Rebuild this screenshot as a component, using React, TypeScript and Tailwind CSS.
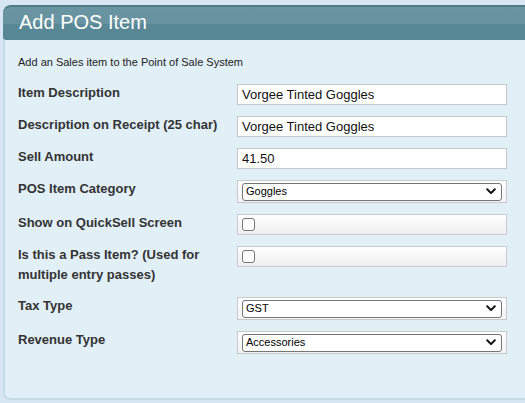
import React from "react";

const font = { fontFamily: '"Liberation Sans", Arial, Helvetica, sans-serif' };

function Chevron() {
  return (
    <svg width="10" height="7" viewBox="0 0 10 7" className="shrink-0">
      <path d="M1.2 1.3 L5 5.1 L8.8 1.3" fill="none" stroke="#111" strokeWidth="2" strokeLinecap="round" strokeLinejoin="round" />
    </svg>
  );
}

function TextField({ value }: { value: string }) {
  return (
    <div className="w-[270px] h-[21px] border border-[#c9c9c9] bg-white flex items-center pl-[4px] text-[13px] text-[#111]">
      {value}
    </div>
  );
}

function SelectField({ value }: { value: string }) {
  return (
    <div className="w-[270px] h-[23px] border border-[#c9c9c9] bg-[linear-gradient(#ffffff,#f3f3f3)] flex items-center px-[4px]">
      <div className="w-full h-[18px] border border-[#767676] rounded-[3px] bg-white flex items-center justify-between pl-[3px] pr-[5px] text-[11px] text-black">
        <span>{value}</span>
        <Chevron />
      </div>
    </div>
  );
}

function CheckField() {
  return (
    <div className="w-[270px] h-[21px] border border-[#c9c9c9] bg-[linear-gradient(#ffffff,#eeeeee)] flex items-center pl-[4px]">
      <div className="w-[13px] h-[13px] border border-[#767676] rounded-[3px] bg-white" />
    </div>
  );
}

function Row({ label, h, children }: { label: React.ReactNode; h?: string; children: React.ReactNode }) {
  return (
    <div className={`flex items-start ${h ?? ""}`}>
      <div className="w-[219px] -mt-[1px] text-[13px] leading-[20px] font-bold text-[#333]">{label}</div>
      {children}
    </div>
  );
}

export default function App() {
  return (
    <div className="w-[525px] h-[403px] bg-[#d6e6f2] pt-[5px] pl-[3px] overflow-hidden" style={font}>
      <div className="h-[395px] bg-[#e1eff7] border-l-2 border-b-2 border-[#c5dbe6] rounded-tl-[8px] rounded-bl-[7px]">
        <div className="-ml-[2px] h-[35px] rounded-tl-[8px] rounded-bl-[3px] border-t-2 border-[#4f7b89] bg-[linear-gradient(#6994a1_0%,#6793a0_52%,#588795_52%,#578694_100%)] flex items-center pl-[16px] pb-[3px]">
          <span className="text-white text-[20px] leading-none">Add POS Item</span>
        </div>
        <div className="pl-[13px]">
          <div className="pt-[15px] text-[11px] leading-[14px] text-[#222]">Add an Sales item to the Point of Sale System</div>
          <div className="mt-[15px] flex flex-col">
            <Row label="Item Description" h="h-[32px]"><TextField value="Vorgee Tinted Goggles" /></Row>
            <Row label="Description on Receipt (25 char)" h="h-[32px]"><TextField value="Vorgee Tinted Goggles" /></Row>
            <Row label="Sell Amount" h="h-[32px]"><TextField value="41.50" /></Row>
            <Row label="POS Item Category" h="h-[34px]"><SelectField value="Goggles" /></Row>
            <Row label="Show on QuickSell Screen" h="h-[32px]"><CheckField /></Row>
            <Row label={<>Is this a Pass Item? (Used for<br />multiple entry passes)</>} h="h-[51px]"><CheckField /></Row>
            <Row label="Tax Type" h="h-[34px]"><SelectField value="GST" /></Row>
            <Row label="Revenue Type"><SelectField value="Accessories" /></Row>
          </div>
        </div>
      </div>
    </div>
  );
}
